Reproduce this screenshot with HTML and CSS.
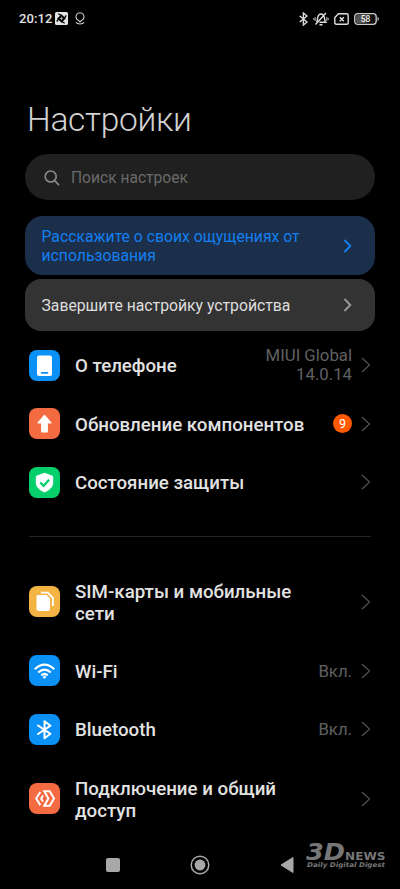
FILE: index.html
```html
<!DOCTYPE html>
<html lang="ru">
<head>
<meta charset="utf-8">
<meta name="viewport" content="width=device-width, initial-scale=1">
<title>Настройки</title>
<link rel="stylesheet" href="styles.css">
</head>
<body>
<svg class="defs" width="0" height="0" aria-hidden="true">
  <symbol id="chevron" viewBox="0 0 10 16"><path d="M1 1l7.500 7L1 15" fill="none" stroke="currentColor" stroke-width="1.1"/></symbol>
  <symbol id="chevron-bold" viewBox="0 0 10 14"><path d="M1.500 1l5.800 6-5.800 6" fill="none" stroke="currentColor" stroke-width="1.9"/></symbol>
</svg>
<div class="phone">
  <header class="status">
    <div class="status-left">
      <span class="clock">20:12</span>
      <svg width="13" height="13" viewBox="0 0 13 13"><rect width="13" height="13" rx="1.500" fill="#e4e4e4"/><path d="M6.500 2.200l4.300 4.300-4.300 4.300-4.300-4.300z" fill="#000"/><path d="M3.300 1.800l3.400 2M11.200 3.300l-2 3.400M9.700 11.200l-3.400-2M1.800 9.700l2-3.400" stroke="#000" stroke-width="1.300"/><path d="M6.500 4.800v3.400M4.800 6.500h3.400" stroke="#aaa" stroke-width=".9"/></svg>
      <svg class="pin" width="10" height="13" viewBox="0 0 10 13" fill="none" stroke="#d0d0d0" stroke-width="1.100"><path d="M3.500 8.400A4 4 0 1 1 6.500 8.400L5 10z"/><path d="M1 10.200c1 2.300 7 2.300 8 0"/></svg>
    </div>
    <div class="status-right">
      <svg width="9" height="14" viewBox="0 0 9 14"><path d="M.8 4l7.200 6-3.600 3V1L8 4 .8 10" fill="none" stroke="#ddd" stroke-width="1.400"/></svg>
      <svg width="16" height="14" viewBox="0 0 16 14" fill="none" stroke="#ddd" stroke-width="1.400"><path d="M3.500 10C5 8.700 4 4.800 5.800 3.100 7.200 1.700 9 1.700 10.300 3.100c1.800 1.900.7 5.200 2.500 7.200H6.500M6.500 12.700h3M2.500 12.500L13 1"/><path d="M2.200 5v4M.6 6v2M13.800 5v4M15.400 6v2" stroke="#888"/></svg>
      <svg width="15" height="12" viewBox="0 0 15 12" fill="none" stroke="#ddd" stroke-width="1.400"><path d="M4.500.8h8.200q1.500 0 1.500 1.500v7.400q0 1.500-1.500 1.500H2.300Q.8 11.200.8 9.700V4.500z"/><path d="M5.800 4.200l4 4m0-4l-4 4"/></svg>
      <svg width="26" height="12" viewBox="0 0 26 12"><rect x=".7" y=".7" width="21.500" height="10.600" rx="3" fill="#111" stroke="#ccc" stroke-width="1.300"/><rect x="2" y="2" width="11" height="8" rx="1.500" fill="#555"/><path d="M23.500 4v4q1.500-.5 1.500-2t-1.500-2" fill="#bbb"/><text class="battery" x="11.500" y="9" text-anchor="middle">58</text></svg>
    </div>
  </header>

  <h1>Настройки</h1>

  <div class="search">
    <svg width="16" height="16" viewBox="0 0 16 16" fill="none" stroke="#8a8a8a" stroke-width="1.600"><circle cx="6.700" cy="6.500" r="5.500"/><path d="M10.700 10.600l4.300 4.500"/></svg>
    <span>Поиск настроек</span>
  </div>

  <div class="card card-blue">
    <span>Расскажите о своих ощущениях от<br>использования</span>
    <svg width="10" height="14"><use href="#chevron-bold"/></svg>
  </div>
  <div class="card card-gray">
    <span>Завершите настройку устройства</span>
    <svg width="10" height="14"><use href="#chevron-bold"/></svg>
  </div>

  <ul class="list">
    <li class="row">
      <span class="icon blue"><svg width="31" height="31" viewBox="0 0 31 31"><rect x="8" y="5.500" width="15" height="20.500" rx="2" fill="#fff"/><path d="M12.700 22.800h5.800" stroke="#0b91f5" stroke-width="1.700" stroke-linecap="round"/></svg></span>
      <span class="label">О телефоне</span>
      <span class="value version">MIUI Global<br>14.0.14</span>
      <svg class="arrow" width="10" height="16"><use href="#chevron"/></svg>
    </li>
    <li class="row">
      <span class="icon orange"><svg width="31" height="31" viewBox="0 0 31 31"><path d="M15.500 7.500l6.500 7.300h-3.700v9h-5.600v-9H9z" fill="#fff" stroke="#fff" stroke-width="1.200" stroke-linejoin="round"/></svg></span>
      <span class="label">Обновление компонентов</span>
      <span class="badge">9</span>
      <svg class="arrow" width="10" height="16"><use href="#chevron"/></svg>
    </li>
    <li class="row">
      <span class="icon green"><svg width="31" height="31" viewBox="0 0 31 31"><path d="M15.500 6.300l8.200 3v6.700c0 4-3.700 7.200-8.200 9-4.500-1.800-8.200-5-8.200-9V9.300z" fill="#fff" stroke="#fff" stroke-linejoin="round"/><path d="M11.300 15.500l3.300 3.300 5.500-6" fill="none" stroke="#04cf6b" stroke-width="2.200"/></svg></span>
      <span class="label">Состояние защиты</span>
      <svg class="arrow" width="10" height="16"><use href="#chevron"/></svg>
    </li>
  </ul>
  <hr>
  <ul class="list">
    <li class="row tall">
      <span class="icon yellow"><svg width="31" height="31" viewBox="0 0 31 31"><path d="M9 9h8.700l3.300 3.500V23q0 2-2 2H9.500q-2 0-2-2V10.500Q7.500 9 9 9z" fill="#fff"/><path d="M12 6.600h6.700l5.200 5.200V20" fill="none" stroke="#fff" stroke-width="1.900"/></svg></span>
      <span class="label">SIM-карты и мобильные<br>сети</span>
      <svg class="arrow" width="10" height="16"><use href="#chevron"/></svg>
    </li>
    <li class="row">
      <span class="icon blue"><svg width="31" height="31" viewBox="0 0 31 31" fill="none" stroke="#fff" stroke-width="2.200"><path d="M5.800 14.200q9.700-9 19.400 0M9.200 17.500q6.300-5.800 12.600 0M12.300 20.300q3.200-2.600 6.400 0"/><circle cx="15.500" cy="22.200" r="1.400" fill="#fff" stroke="none"/></svg></span>
      <span class="label">Wi-Fi</span>
      <span class="value">Вкл.</span>
      <svg class="arrow" width="10" height="16"><use href="#chevron"/></svg>
    </li>
    <li class="row">
      <span class="icon blue"><svg width="31" height="31" viewBox="0 0 31 31"><path d="M9 11.500l12.500 8.300-6 4.500V7.200l6 4.500L9 20" fill="none" stroke="#fff" stroke-width="2" stroke-linejoin="round" stroke-linecap="round"/></svg></span>
      <span class="label">Bluetooth</span>
      <span class="value">Вкл.</span>
      <svg class="arrow" width="10" height="16"><use href="#chevron"/></svg>
    </li>
    <li class="row tall">
      <span class="icon orange"><svg width="31" height="31" viewBox="0 0 31 31" fill="none" stroke="#fff" stroke-width="2"><path d="M11.300 9L7.200 15.500l4.100 6.600M15.200 8.300h5.500l4.300 7.200-4.300 7.300h-5.500l4.200-7.300z"/><path d="M14 12.500l-1.800 3 1.800 3"/></svg></span>
      <span class="label">Подключение и общий<br>доступ</span>
      <svg class="arrow" width="10" height="16"><use href="#chevron"/></svg>
    </li>
  </ul>

  <nav class="nav">
    <svg width="20" height="20" viewBox="0 0 20 20"><rect x="3" y="3" width="14" height="14" rx="2" fill="#a8a8a8"/></svg>
    <svg width="20" height="20" viewBox="0 0 20 20"><circle cx="10" cy="10" r="8.800" fill="none" stroke="#a8a8a8" stroke-width="1.500"/><circle cx="10" cy="10" r="5.400" fill="#a8a8a8"/></svg>
    <svg width="20" height="20" viewBox="0 0 20 20"><path d="M4 10l12-7.500v15z" fill="#a8a8a8" stroke="#a8a8a8" stroke-linejoin="round"/></svg>
  </nav>
  <svg class="watermark" width="84" height="36" viewBox="0 0 84 36">
    <text class="wm-big" x="0" y="23.500" textLength="39" lengthAdjust="spacingAndGlyphs">3D</text>
    <text class="wm-news" x="39" y="23.500" textLength="40.500" lengthAdjust="spacingAndGlyphs">NEWS</text>
    <text class="wm-tag" x="1" y="30.500" textLength="78" lengthAdjust="spacingAndGlyphs">Daily Digital Digest</text>
  </svg>
</div>
</body>
</html>
```
FILE: styles.css
```css
* { box-sizing: border-box; }
body {
  margin: 0;
  background: #000;
  color: #e2e2e2;
  font-family: Roboto, sans-serif;
}
.defs { position: absolute; }
svg { display: block; flex: none; }
.phone {
  position: relative;
  display: flex;
  flex-direction: column;
  width: 400px;
  height: 889px;
  overflow: hidden;
}
.status {
  display: flex;
  justify-content: space-between;
  align-items: center;
  height: 37px;
  padding: 0 20px 0 19px;
}
.status-left, .status-right { display: flex; align-items: center; }
.status-left { gap: 3px; }
.pin { margin-left: 4px; }
.status-right { gap: 5px; }
.clock { font-size: 13px; font-weight: 500; line-height: 16px; letter-spacing: 0.1px; }
.battery { font: 500 8.5px Roboto, sans-serif; fill: #eee; }
h1 {
  margin: 63px 0 0 27px;
  height: 54px;
  line-height: 40px;
  font-size: 33.5px;
  font-weight: 300;
  letter-spacing: -0.3px;
  color: #d2d2d2;
}
.search {
  display: flex;
  align-items: center;
  gap: 11px;
  height: 46px;
  margin: 0 25px 16px;
  padding: 1px 0 0 19px;
  border-radius: 23px;
  background: #202020;
  color: #6a6a6a;
  font-size: 15.6px;
}
.card {
  display: flex;
  align-items: center;
  justify-content: space-between;
  margin: 0 25px;
  padding: 0 22px 0 16.5px;
  border-radius: 16px;
  font-size: 15.75px;
  line-height: 19px;
}
.card-gray span { padding-top: 1px; }
.card-blue { height: 59px; margin-bottom: 4px; background: #1b2e4a; color: #147ff0; border-radius: 18px; }
.card-gray { height: 52px; margin-bottom: 5px; background: #333; color: #dedede; }
.card-gray svg { color: #999; }
.list { margin: 0; padding: 0; list-style: none; }
.row {
  display: flex;
  align-items: center;
  height: 58.5px;
  padding: 0 29px;
}
.tall { height: 80px; }
.icon { flex: none; width: 31px; height: 31px; margin-right: 15px; border-radius: 8px; }
.blue { background: #0b91f5; }
.orange { background: #f46b42; }
.green { background: #04cf6b; }
.yellow { background: #f3b443; }
.label {
  flex: 1;
  padding-top: 2px;
  font-size: 18.7px;
  font-weight: 500;
  line-height: 22px;
  white-space: nowrap;
}
.value {
  padding-top: 1px;
  color: #606060;
  font-size: 16.75px;
  line-height: 19px;
  text-align: right;
}
.version { padding-top: 0; }
.arrow { margin-left: 9px; color: #565656; }
.badge {
  width: 19px;
  height: 19px;
  border-radius: 50%;
  background: #ff5a00;
  color: #fff;
  font-size: 12.5px;
  line-height: 19px;
  text-align: center;
}
hr { width: 342px; height: 1px; margin: 24px auto 25px; border: 0; background: #242424; }
.nav {
  display: flex;
  justify-content: space-between;
  margin-top: 16.5px;
  padding: 0 103px;
}
.watermark { position: absolute; left: 306px; top: 836px; fill: #777; }
.wm-big { font: italic 700 23px "DejaVu Sans", sans-serif; }
.wm-news { font: 700 10px "DejaVu Sans", sans-serif; }
.wm-tag { font: italic 700 6.5px "DejaVu Sans", sans-serif; }
```
